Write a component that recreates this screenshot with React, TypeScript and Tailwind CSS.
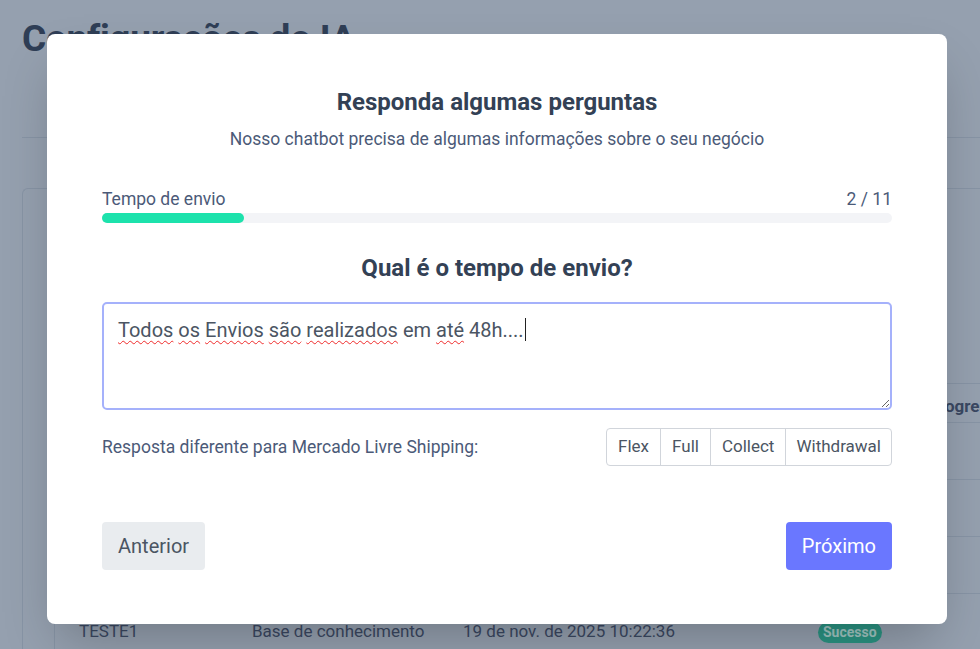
import React from "react";

const rows = [{ y: "row1" }, { y: "row2" }, { y: "row3" }];

function Background() {
  return (
    <div className="h-[649px] w-[980px] overflow-hidden bg-[#95a0af] text-[#2f3e56]">
      <div className="pl-[22px] pt-[17px]">
        <h1 className="text-[37px] font-bold leading-[44px] tracking-[-0.3px]">Configurações do IA</h1>
      </div>
      <div className="ml-[22px] mt-[76px] border-t border-[#8794a5]" />
      <div className="ml-[22px] mt-[50px] h-[500px] rounded-tl-md border-l border-t border-[#8794a5]">
        <div className="ml-[31px] mt-[194px] h-[400px] border-l border-[#8794a5]">
          <div className="flex h-[40px] items-center whitespace-nowrap border-t border-b border-[#8794a5] pt-[8px] text-[17px] font-bold text-[#3a4862]">
            <div className="w-[197px] shrink-0 pl-[23px]">Nome</div>
            <div className="w-[211px] shrink-0">Tipo</div>
            <div className="w-[355px] shrink-0">Data</div>
            <div className="w-[110px] shrink-0">Status</div>
            <div className="shrink-0">Progresso</div>
          </div>
          {rows.map((r) => (
            <div key={r.y} className="h-[57px] border-b border-[#8794a5]" />
          ))}
          <div className="flex h-[57px] items-center whitespace-nowrap pt-[18px] text-[17px] text-[#3b4862]">
            <div className="w-[197px] shrink-0 pl-[24px]">TESTE1</div>
            <div className="w-[211px] shrink-0">Base de conhecimento</div>
            <div className="w-[355px] shrink-0">19 de nov. de 2025 10:22:36</div>
            <div className="w-[110px] shrink-0">
              <span className="inline-flex h-[21px] items-center rounded-full bg-[#2b9483] px-[5px] text-[14px] font-bold text-[#a2c7c3]">
                Sucesso
              </span>
            </div>
          </div>
        </div>
      </div>
    </div>
  );
}

function Modal() {
  const misspelled = (w: string) => (
    <span className="underline decoration-wavy decoration-[#ef2b2b] decoration-1 underline-offset-[3px]">{w}</span>
  );
  return (
    <div className="absolute inset-0 flex justify-start">
      <div className="ml-[47px] mt-[34px] h-[590px] w-[900px] rounded-lg bg-white px-[55px] pt-[54px] shadow-2xl">
        <h2 className="text-center text-[24px] font-bold leading-[28px] text-[#334155]">Responda algumas perguntas</h2>
        <p className="mt-[11px] text-center text-[17.5px] leading-[24px] text-[#4b5a78]">
          Nosso chatbot precisa de algumas informações sobre o seu negócio
        </p>
        <div className="mt-[36px] flex items-center justify-between text-[17.5px] leading-[24px] text-[#4b5a78]">
          <span>Tempo de envio</span>
          <span>2 / 11</span>
        </div>
        <div className="mt-[2px] h-[10px] w-full rounded-full bg-[#f3f4f7]">
          <div className="h-full w-[18%] rounded-full bg-[#1de2ac]" />
        </div>
        <h3 className="mt-[31px] text-center text-[24px] font-bold leading-[28px] text-[#334155]">Qual é o tempo de envio?</h3>
        <div className="mt-[20px] h-[108px] w-full resize-y overflow-auto rounded-[5px] border-2 border-[#a5b1fb] px-[14px] pt-[10px] text-[20px] leading-[26px] text-[#4b5563]">
          {misspelled("Todos")} {misspelled("os")} {misspelled("Envios")} {misspelled("são")} {misspelled("realizados")} em{" "}
          {misspelled("até")} 48h....
          <span className="ml-[1px] inline-block h-[23px] w-px translate-y-[4px] bg-[#222]" />
        </div>
        <div className="mt-[18px] flex items-center justify-between">
          <span className="text-[17.5px] text-[#4b5a78]">Resposta diferente para Mercado Livre Shipping:</span>
          <div className="flex h-[38px] overflow-hidden rounded-[4px] border border-[#d1d5db] text-[17px] text-[#4b5563]">
            <button className="px-[11px]">Flex</button>
            <button className="border-l border-[#d1d5db] px-[11px]">Full</button>
            <button className="border-l border-[#d1d5db] px-[11px]">Collect</button>
            <button className="border-l border-[#d1d5db] px-[10px]">Withdrawal</button>
          </div>
        </div>
        <div className="mt-[56px] flex items-center justify-between">
          <button className="h-12 rounded-[4px] bg-[#e9ecef] px-[16px] text-[20px] text-[#4b5563]">Anterior</button>
          <button className="h-12 rounded-[4px] bg-[#6a77ff] px-[16px] text-[20px] text-white">Próximo</button>
        </div>
      </div>
    </div>
  );
}

export default function App() {
  return (
    <div className="relative h-[649px] w-[980px] overflow-hidden" style={{ fontFamily: "Roboto, 'Liberation Sans', sans-serif" }}>
      <Background />
      <Modal />
    </div>
  );
}
